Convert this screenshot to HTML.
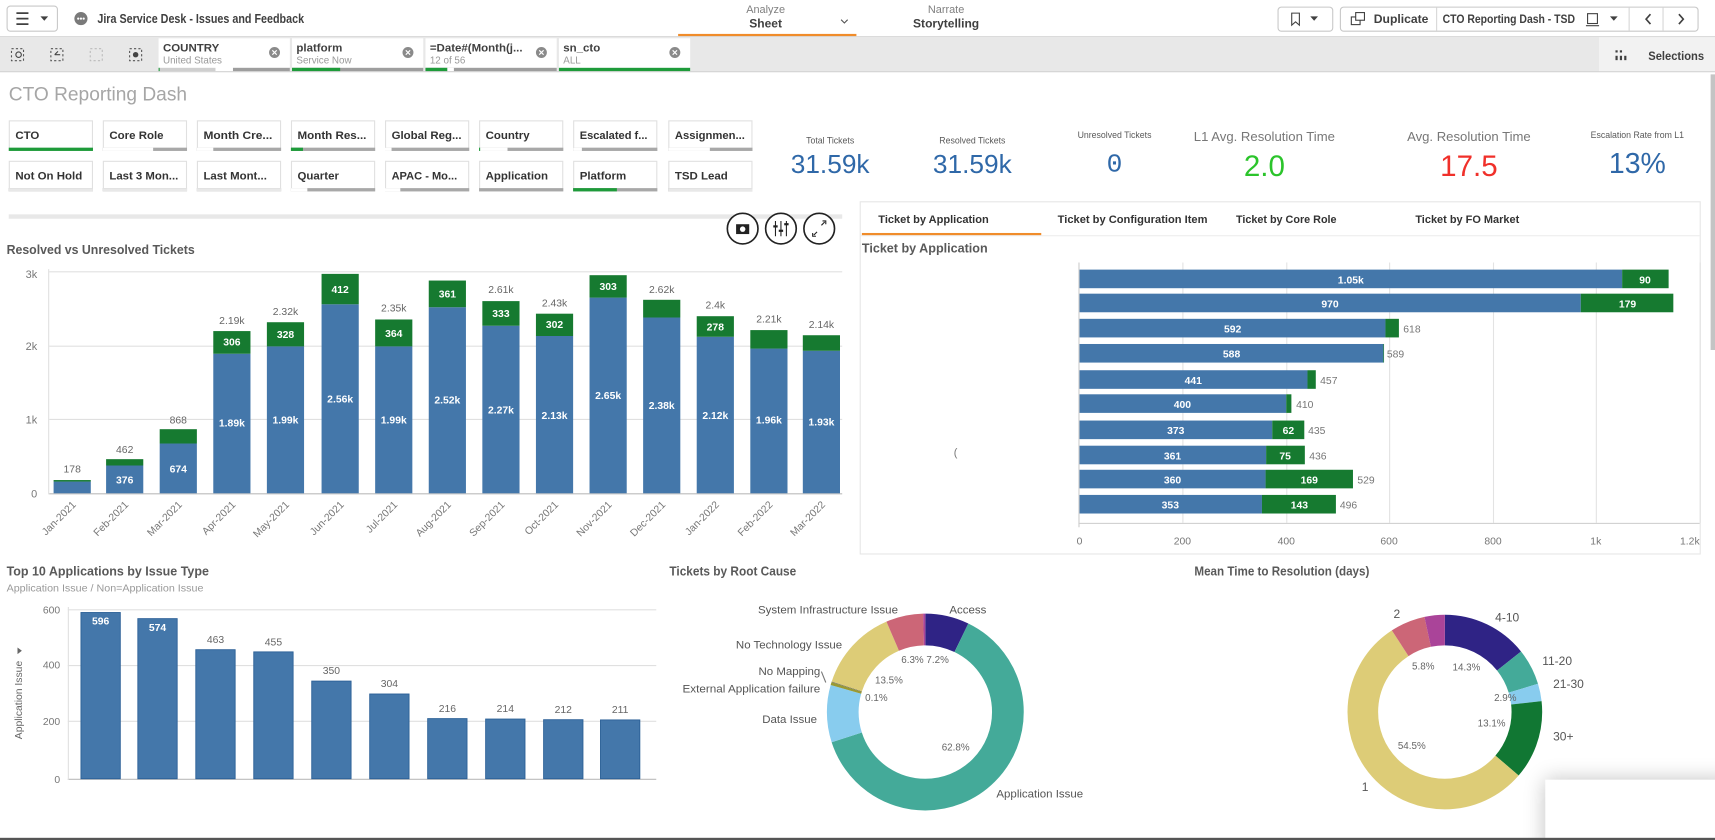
<!DOCTYPE html>
<html><head><meta charset="utf-8"><style>
html,body{margin:0;padding:0;background:#fff;width:1715px;height:840px;overflow:hidden}
svg{display:block}
text{font-family:"Liberation Sans",sans-serif}
.b{font-weight:bold}
.m{font-family:"Liberation Mono",monospace}
</style></head><body>
<svg width="1715" height="840" viewBox="0 0 1568 768" preserveAspectRatio="none" xmlns="http://www.w3.org/2000/svg">
<defs>
<filter id="sh" x="-50%" y="-50%" width="200%" height="200%"><feGaussianBlur in="SourceAlpha" stdDeviation="10"/><feComponentTransfer><feFuncA type="linear" slope="0.25"/></feComponentTransfer><feMerge><feMergeNode/><feMergeNode in="SourceGraphic"/></feMerge></filter>
</defs>
<!-- top bar -->
<rect x="0" y="0" width="1568" height="34" fill="#fff"/>
<line x1="0" y1="33.5" x2="1568" y2="33.5" stroke="#d6d6d6"/>
<rect x="6.5" y="5.5" width="46" height="23" rx="3" fill="#fff" stroke="#c8c8c8"/>
<path d="M15 12h11M15 17h11M15 22h11" stroke="#404040" stroke-width="1.6"/>
<path d="M37 15l3.5 4 3.5-4z" fill="#404040"/>
<circle cx="74" cy="17" r="6" fill="#7a7a7a"/>
<circle cx="71.5" cy="17" r="1" fill="#fff"/><circle cx="74" cy="17" r="1" fill="#fff"/><circle cx="76.5" cy="17" r="1" fill="#fff"/>
<text x="89" y="21" font-size="11.5" class="b" fill="#404040" textLength="189" lengthAdjust="spacingAndGlyphs">Jira Service Desk - Issues and Feedback</text>
<text x="700" y="12" font-size="10" fill="#808080" text-anchor="middle">Analyze</text>
<text x="700" y="25" font-size="11" class="b" fill="#404040" text-anchor="middle">Sheet</text>
<path d="M769 18l3 3 3-3" stroke="#555" fill="none"/>
<rect x="620" y="31" width="163" height="2" fill="#f08c2a"/>
<text x="865" y="12" font-size="10" fill="#808080" text-anchor="middle">Narrate</text>
<text x="865" y="25" font-size="11" class="b" fill="#404040" text-anchor="middle">Storytelling</text>
<rect x="1168.5" y="6.5" width="50" height="22" rx="3" fill="#fff" stroke="#c8c8c8"/>
<path d="M1181 12v11l3.5-3 3.5 3v-11z" fill="none" stroke="#404040"/>
<path d="M1198 15l3.5 4 3.5-4z" fill="#404040"/>
<rect x="1225.5" y="6.5" width="327" height="22" rx="3" fill="#fff" stroke="#c8c8c8"/>
<rect x="1235.5" y="15.5" width="8" height="7" fill="#fff" stroke="#404040"/><rect x="1239.5" y="11.5" width="8" height="7" fill="#fff" stroke="#404040"/>
<text x="1256" y="21" font-size="11" class="b" fill="#404040" textLength="50" lengthAdjust="spacingAndGlyphs">Duplicate</text>
<line x1="1313.5" y1="7" x2="1313.5" y2="28" stroke="#d6d6d6"/>
<text x="1319" y="21" font-size="11" class="b" fill="#404040" textLength="121" lengthAdjust="spacingAndGlyphs">CTO Reporting Dash - TSD</text>
<rect x="1451.5" y="12.5" width="9" height="9" fill="none" stroke="#404040"/><line x1="1450" y1="23.5" x2="1462" y2="23.5" stroke="#404040"/>
<path d="M1472 15l3.5 4 3.5-4z" fill="#404040"/>
<line x1="1489.5" y1="7" x2="1489.5" y2="28" stroke="#d6d6d6"/>
<path d="M1509 13l-4 4.5 4 4.5" stroke="#404040" stroke-width="1.5" fill="none"/>
<line x1="1520.5" y1="7" x2="1520.5" y2="28" stroke="#d6d6d6"/>
<path d="M1535 13l4 4.5-4 4.5" stroke="#404040" stroke-width="1.5" fill="none"/>

<!-- selection bar -->
<rect x="0" y="34" width="1568" height="31" fill="#e8e8e8"/>
<line x1="0" y1="65.5" x2="1568" y2="65.5" stroke="#d0d0d0"/>
<g fill="none" stroke="#555" stroke-dasharray="2 2">
<rect x="10.5" y="44.5" width="11" height="11"/><rect x="46.5" y="44.5" width="11" height="11"/><rect x="82.5" y="44.5" width="11" height="11" stroke="#bbb"/><rect x="118.5" y="44.5" width="11" height="11"/>
</g>
<circle cx="17" cy="50" r="2.5" fill="none" stroke="#444"/><circle cx="124" cy="50" r="2.5" fill="#444"/>
<path d="M50 50l3-3M50 50h5" stroke="#444"/>
<g>
<rect x="145" y="35" width="120" height="30" fill="#fff"/>
<text x="149" y="47" font-size="10.5" class="b" fill="#404040">COUNTRY</text>
<text x="149" y="58" font-size="9" fill="#999">United States</text>
<circle cx="251" cy="48" r="5" fill="#8a8a8a"/><path d="M249 46l4 4M253 46l-4 4" stroke="#fff"/>
<rect x="145" y="62" width="52" height="3" fill="#cfcfcf"/><rect x="145" y="62" width="1" height="3" fill="#1e9b3a"/><rect x="213" y="62" width="52" height="3" fill="#9e9e9e"/>
<rect x="267" y="35" width="120" height="30" fill="#fff"/>
<text x="271" y="47" font-size="10.5" class="b" fill="#404040">platform</text>
<text x="271" y="58" font-size="9" fill="#999">Service Now</text>
<circle cx="373" cy="48" r="5" fill="#8a8a8a"/><path d="M371 46l4 4M375 46l-4 4" stroke="#fff"/>
<rect x="267" y="62" width="120" height="3" fill="#9e9e9e"/><rect x="267" y="62" width="44" height="3" fill="#1e9b3a"/>
<rect x="389" y="35" width="120" height="30" fill="#fff"/>
<text x="393" y="47" font-size="10.5" class="b" fill="#404040">=Date#(Month(j...</text>
<text x="393" y="58" font-size="9" fill="#999">12 of 56</text>
<circle cx="495" cy="48" r="5" fill="#8a8a8a"/><path d="M493 46l4 4M497 46l-4 4" stroke="#fff"/>
<rect x="389" y="62" width="120" height="3" fill="#9e9e9e"/><rect x="389" y="62" width="20" height="3" fill="#1e9b3a"/><rect x="409" y="62" width="6" height="3" fill="#fff"/>
<rect x="511" y="35" width="120" height="30" fill="#fff"/>
<text x="515" y="47" font-size="10.5" class="b" fill="#404040">sn_cto</text>
<text x="515" y="58" font-size="9" fill="#999">ALL</text>
<circle cx="617" cy="48" r="5" fill="#8a8a8a"/><path d="M615 46l4 4M619 46l-4 4" stroke="#fff"/>
<rect x="511" y="62" width="120" height="3" fill="#1e9b3a"/>
</g>
<rect x="1462" y="34" width="106" height="31" fill="#f2f2f2"/>
<g fill="#404040"><rect x="1477" y="46" width="2" height="2"/><rect x="1481" y="46" width="2" height="2"/><rect x="1477" y="51" width="2" height="4"/><rect x="1481" y="51" width="2" height="4"/><rect x="1485" y="51" width="2" height="4"/></g>
<text x="1507" y="55" font-size="11" class="b" fill="#404040" textLength="51" lengthAdjust="spacingAndGlyphs">Selections</text>
<rect x="1564" y="68" width="4" height="252" fill="#c4c4c4"/>

<text x="8" y="92" font-size="18" fill="#a6a6a6" textLength="163" lengthAdjust="spacingAndGlyphs">CTO Reporting Dash</text>

<!-- filter buttons -->
<g stroke="#e0e0e0" fill="#fff">
<rect x="8.5" y="110.5" width="76" height="27"/><rect x="94.5" y="110.5" width="76" height="27"/><rect x="180.5" y="110.5" width="76" height="27"/><rect x="266.5" y="110.5" width="76" height="27"/><rect x="352.5" y="110.5" width="76" height="27"/><rect x="438.5" y="110.5" width="76" height="27"/><rect x="524.5" y="110.5" width="76" height="27"/><rect x="611.5" y="110.5" width="76" height="27"/>
<rect x="8.5" y="147.5" width="76" height="27"/><rect x="94.5" y="147.5" width="76" height="27"/><rect x="180.5" y="147.5" width="76" height="27"/><rect x="266.5" y="147.5" width="76" height="27"/><rect x="352.5" y="147.5" width="76" height="27"/><rect x="438.5" y="147.5" width="76" height="27"/><rect x="524.5" y="147.5" width="76" height="27"/><rect x="611.5" y="147.5" width="76" height="27"/>
</g>
<g fill="#a8a8a8">
<rect x="94" y="135" width="77" height="3"/><rect x="180" y="135" width="77" height="3"/><rect x="266" y="135" width="77" height="3"/><rect x="352" y="135" width="77" height="3"/><rect x="438" y="135" width="77" height="3"/><rect x="524" y="135" width="77" height="3"/><rect x="611" y="135" width="77" height="3"/>
<rect x="8" y="172" width="77" height="3"/><rect x="94" y="172" width="77" height="3"/><rect x="180" y="172" width="77" height="3"/><rect x="266" y="172" width="77" height="3"/><rect x="352" y="172" width="77" height="3"/><rect x="438" y="172" width="77" height="3"/><rect x="524" y="172" width="77" height="3"/><rect x="611" y="172" width="77" height="3"/>
</g>
<g fill="#fff"><rect x="94" y="135" width="46" height="3"/><rect x="180" y="135" width="15" height="3"/><rect x="438" y="135" width="26" height="3"/><rect x="352" y="135" width="6" height="3"/><rect x="524" y="135" width="8" height="3"/><rect x="611" y="135" width="38" height="3"/>
<rect x="8" y="172" width="77" height="3" fill="#e8e8e8"/><rect x="94" y="172" width="77" height="3" fill="#e8e8e8"/><rect x="180" y="172" width="77" height="3" fill="#e8e8e8"/><rect x="266" y="172" width="15" height="3"/><rect x="352" y="172" width="14" height="3"/><rect x="611" y="172" width="77" height="3" fill="#e8e8e8"/></g>
<rect x="8" y="135" width="77" height="3" fill="#1e9b3a"/><rect x="266" y="135" width="11" height="3" fill="#1e9b3a"/><rect x="438" y="135" width="1" height="3" fill="#1e9b3a"/><rect x="524" y="172" width="40" height="3" fill="#1e9b3a"/>
<g font-size="10.5" class="b" fill="#333">
<text x="14" y="127">CTO</text><text x="100" y="127">Core Role</text><text x="186" y="127" textLength="63" lengthAdjust="spacingAndGlyphs">Month Cre...</text><text x="272" y="127" textLength="63" lengthAdjust="spacingAndGlyphs">Month Res...</text><text x="358" y="127" textLength="64" lengthAdjust="spacingAndGlyphs">Global Reg...</text><text x="444" y="127">Country</text><text x="530" y="127" textLength="62" lengthAdjust="spacingAndGlyphs">Escalated f...</text><text x="617" y="127" textLength="64" lengthAdjust="spacingAndGlyphs">Assignmen...</text>
<text x="14" y="164">Not On Hold</text><text x="100" y="164" textLength="63" lengthAdjust="spacingAndGlyphs">Last 3 Mon...</text><text x="186" y="164" textLength="58" lengthAdjust="spacingAndGlyphs">Last Mont...</text><text x="272" y="164">Quarter</text><text x="358" y="164" textLength="60" lengthAdjust="spacingAndGlyphs">APAC - Mo...</text><text x="444" y="164">Application</text><text x="530" y="164">Platform</text><text x="617" y="164">TSD Lead</text>
</g>

<!-- KPIs -->
<g text-anchor="middle" fill="#595959">
<text x="759" y="131" font-size="8">Total Tickets</text>
<text x="889" y="131" font-size="8">Resolved Tickets</text>
<text x="1019" y="126" font-size="8">Unresolved Tickets</text>
<text x="1156" y="129" font-size="12" fill="#777">L1 Avg. Resolution Time</text>
<text x="1343" y="129" font-size="12" fill="#777">Avg. Resolution Time</text>
<text x="1497" y="126" font-size="8">Escalation Rate from L1</text>
</g>
<g text-anchor="middle" font-size="24">
<text x="759" y="158" fill="#2f68a8">31.59k</text>
<text x="889" y="158" fill="#2f68a8">31.59k</text>
<text x="1019" y="157" fill="#2f68a8" class="m">0</text>
<text x="1156" y="161" fill="#2bc42b" font-size="27">2.0</text>
<text x="1343" y="161" fill="#f0302a" font-size="27">17.5</text>
<text x="1497" y="158" fill="#2f68a8" font-size="26">13%</text>
</g>

<!-- left chart -->
<rect x="8" y="196" width="762" height="4" fill="#e8e8e8"/>
<g fill="#fff" stroke="#222" stroke-width="1.5"><circle cx="679" cy="209" r="14"/><circle cx="714" cy="209" r="14"/><circle cx="749" cy="209" r="14"/></g>
<rect x="673" y="205" width="12" height="9" fill="#222"/><circle cx="679" cy="209.5" r="2.5" fill="#fff"/>
<path d="M709 202v14M714 202v14M719 202v14" stroke="#222"/><rect x="707" y="206" width="4" height="2" fill="#222"/><rect x="712" y="210" width="4" height="2" fill="#222"/><rect x="717" y="204" width="4" height="2" fill="#222"/>
<path d="M752 202l3 0 0 3M746 216l-3 0 0-3M754 203l-3 3M744 215l3-3" stroke="#222" fill="none"/>
<text x="6" y="232" font-size="12" class="b" fill="#595959" textLength="172" lengthAdjust="spacingAndGlyphs">Resolved vs Unresolved Tickets</text>
<g stroke="#e0e0e0"><line x1="45" y1="248.5" x2="770" y2="248.5"/><line x1="45" y1="316.5" x2="770" y2="316.5"/><line x1="45" y1="383.5" x2="770" y2="383.5"/></g>
<line x1="45" y1="451.5" x2="770" y2="451.5" stroke="#bbb"/>
<line x1="44.5" y1="246" x2="44.5" y2="452" stroke="#e0e0e0"/>
<g font-size="10" fill="#777" text-anchor="end" class="m"><text x="34" y="254">3k</text><text x="34" y="320">2k</text><text x="34" y="387">1k</text><text x="34" y="455">0</text></g>
<g fill="#4477aa">
<rect x="49" y="440.3" width="34" height="10.7"/><rect x="97" y="425.6" width="34" height="25.4"/><rect x="146" y="405.5" width="34" height="45.5"/><rect x="195" y="323.4" width="34" height="127.6"/><rect x="244" y="316.7" width="34" height="134.3"/><rect x="294" y="278.2" width="34" height="172.8"/><rect x="343" y="316.7" width="34" height="134.3"/><rect x="392" y="280.9" width="34" height="170.1"/><rect x="441" y="297.8" width="34" height="153.2"/><rect x="490" y="307.2" width="34" height="143.8"/><rect x="539" y="272.1" width="34" height="178.9"/><rect x="588" y="290.3" width="34" height="160.7"/><rect x="637" y="307.9" width="34" height="143.1"/><rect x="686" y="318.7" width="34" height="132.3"/><rect x="734" y="320.7" width="34" height="130.3"/>
</g>
<g fill="#167a30">
<rect x="49" y="438.9" width="34" height="1.4"/><rect x="97" y="419.8" width="34" height="5.8"/><rect x="146" y="392.4" width="34" height="13.1"/><rect x="195" y="302.7" width="34" height="20.7"/><rect x="244" y="294.6" width="34" height="22.1"/><rect x="294" y="250.4" width="34" height="27.8"/><rect x="343" y="292.1" width="34" height="24.6"/><rect x="392" y="256.5" width="34" height="24.4"/><rect x="441" y="275.3" width="34" height="22.5"/><rect x="490" y="286.8" width="34" height="20.4"/><rect x="539" y="251.6" width="34" height="20.5"/><rect x="588" y="274.1" width="34" height="16.2"/><rect x="637" y="289.1" width="34" height="18.8"/><rect x="686" y="301.8" width="34" height="16.9"/><rect x="734" y="306.5" width="34" height="14.2"/>
</g>
<g font-size="9.5" fill="#666" text-anchor="middle" class="m">
<text x="66" y="432">178</text><text x="114" y="414">462</text><text x="163" y="387">868</text><text x="212" y="296">2.19k</text><text x="261" y="288">2.32k</text><text x="360" y="285">2.35k</text><text x="458" y="268">2.61k</text><text x="507" y="280">2.43k</text><text x="605" y="268">2.62k</text><text x="654" y="282">2.4k</text><text x="703" y="295">2.21k</text><text x="751" y="300">2.14k</text>
</g>
<g font-size="9.5" fill="#fff" text-anchor="middle" class="b">
<text x="114" y="442">376</text><text x="163" y="432">674</text><text x="212" y="390">1.89k</text><text x="261" y="387">1.99k</text><text x="311" y="368">2.56k</text><text x="360" y="387">1.99k</text><text x="409" y="369">2.52k</text><text x="458" y="378">2.27k</text><text x="507" y="383">2.13k</text><text x="556" y="365">2.65k</text><text x="605" y="374">2.38k</text><text x="654" y="383">2.12k</text><text x="703" y="387">1.96k</text><text x="751" y="389">1.93k</text>
<text x="212" y="316">306</text><text x="261" y="309">328</text><text x="311" y="268">412</text><text x="360" y="308">364</text><text x="409" y="272">361</text><text x="458" y="290">333</text><text x="507" y="300">302</text><text x="556" y="265">303</text><text x="654" y="302">278</text>
</g>
<g font-size="9.5" fill="#777" text-anchor="end" class="m">
<text transform="translate(70,462) rotate(-45)">Jan-2021</text><text transform="translate(118,462) rotate(-45)">Feb-2021</text><text transform="translate(167,462) rotate(-45)">Mar-2021</text><text transform="translate(216,462) rotate(-45)">Apr-2021</text><text transform="translate(265,462) rotate(-45)">May-2021</text><text transform="translate(315,462) rotate(-45)">Jun-2021</text><text transform="translate(364,462) rotate(-45)">Jul-2021</text><text transform="translate(413,462) rotate(-45)">Aug-2021</text><text transform="translate(462,462) rotate(-45)">Sep-2021</text><text transform="translate(511,462) rotate(-45)">Oct-2021</text><text transform="translate(560,462) rotate(-45)">Nov-2021</text><text transform="translate(609,462) rotate(-45)">Dec-2021</text><text transform="translate(658,462) rotate(-45)">Jan-2022</text><text transform="translate(707,462) rotate(-45)">Feb-2022</text><text transform="translate(755,462) rotate(-45)">Mar-2022</text>
</g>

<!-- right panel -->
<rect x="786.5" y="184.5" width="768" height="322" fill="#fff" stroke="#e6e6e6"/>
<line x1="787" y1="215.5" x2="1554" y2="215.5" stroke="#eee"/>
<rect x="788" y="213" width="164" height="2" fill="#f08c2a"/>
<g font-size="10.5" class="b" fill="#333"><text x="803" y="204" textLength="101" lengthAdjust="spacingAndGlyphs">Ticket by Application</text><text x="967" y="204" textLength="137" lengthAdjust="spacingAndGlyphs">Ticket by Configuration Item</text><text x="1130" y="204" textLength="92" lengthAdjust="spacingAndGlyphs">Ticket by Core Role</text><text x="1294" y="204" textLength="95" lengthAdjust="spacingAndGlyphs">Ticket by FO Market</text></g>
<text x="788" y="231" font-size="12" class="b" fill="#595959" textLength="115" lengthAdjust="spacingAndGlyphs">Ticket by Application</text>
<text x="872" y="417" font-size="10" fill="#777">(</text>
<g stroke="#e3e3e3"><line x1="1081.5" y1="240" x2="1081.5" y2="478"/><line x1="1176.5" y1="240" x2="1176.5" y2="478"/><line x1="1270.5" y1="240" x2="1270.5" y2="478"/><line x1="1365.5" y1="240" x2="1365.5" y2="478"/><line x1="1459.5" y1="240" x2="1459.5" y2="478"/><line x1="1554.5" y1="240" x2="1554.5" y2="478"/></g>
<line x1="986.5" y1="240" x2="986.5" y2="482" stroke="#ccc"/>
<line x1="986" y1="478.5" x2="1554" y2="478.5" stroke="#ccc"/>
<g fill="#4477aa">
<rect x="987" y="246.5" width="496.1" height="17"/><rect x="987" y="268.5" width="458.3" height="17"/><rect x="987" y="291.5" width="279.7" height="17"/><rect x="987" y="314.5" width="277.8" height="17"/><rect x="987" y="338.5" width="208.4" height="17"/><rect x="987" y="360.5" width="189" height="17"/><rect x="987" y="384.5" width="176.2" height="17"/><rect x="987" y="407.5" width="170.6" height="17"/><rect x="987" y="429.5" width="170.1" height="17"/><rect x="987" y="452.5" width="166.8" height="17"/>
</g>
<g fill="#167a30">
<rect x="1483.1" y="246.5" width="42.5" height="17"/><rect x="1445.3" y="268.5" width="84.6" height="17"/><rect x="1266.7" y="291.5" width="12.3" height="17"/><rect x="1264.8" y="314.5" width="0.6" height="17"/><rect x="1195.4" y="338.5" width="7.6" height="17"/><rect x="1176" y="360.5" width="4.7" height="17"/><rect x="1163.2" y="384.5" width="29.3" height="17"/><rect x="1157.6" y="407.5" width="35.4" height="17"/><rect x="1157.1" y="429.5" width="79.9" height="17"/><rect x="1153.8" y="452.5" width="67.6" height="17"/>
</g>
<g font-size="9.5" fill="#fff" text-anchor="middle" class="b">
<text x="1235" y="259">1.05k</text><text x="1216" y="281">970</text><text x="1127" y="304">592</text><text x="1126" y="327">588</text><text x="1091" y="351">441</text><text x="1081" y="373">400</text><text x="1075" y="397">373</text><text x="1072" y="420">361</text><text x="1072" y="442">360</text><text x="1070" y="465">353</text>
<text x="1504" y="259">90</text><text x="1488" y="281">179</text><text x="1178" y="397">62</text><text x="1175" y="420">75</text><text x="1197" y="442">169</text><text x="1188" y="465">143</text>
</g>
<g font-size="9.5" fill="#777" class="m">
<text x="1283" y="304">618</text><text x="1268" y="327">589</text><text x="1207" y="351">457</text><text x="1185" y="373">410</text><text x="1196" y="397">435</text><text x="1197" y="420">436</text><text x="1241" y="442">529</text><text x="1225" y="465">496</text>
</g>
<g font-size="9.5" fill="#777" text-anchor="middle" class="m">
<text x="987" y="498">0</text><text x="1081" y="498">200</text><text x="1176" y="498">400</text><text x="1270" y="498">600</text><text x="1365" y="498">800</text><text x="1459" y="498">1k</text><text x="1545" y="498">1.2k</text>
</g>

<!-- bottom left chart -->
<text x="6" y="526" font-size="12" class="b" fill="#595959" textLength="185" lengthAdjust="spacingAndGlyphs">Top 10 Applications by Issue Type</text>
<text x="6" y="541" font-size="9" fill="#999" textLength="180" lengthAdjust="spacingAndGlyphs">Application Issue / Non=Application Issue</text>
<g stroke="#e0e0e0"><line x1="62" y1="557.5" x2="600" y2="557.5"/><line x1="62" y1="608.5" x2="600" y2="608.5"/><line x1="62" y1="659.5" x2="600" y2="659.5"/></g>
<line x1="62" y1="712.5" x2="600" y2="712.5" stroke="#bbb"/>
<line x1="62.5" y1="555" x2="62.5" y2="713" stroke="#e0e0e0"/>
<g font-size="9.5" fill="#777" text-anchor="end" class="m"><text x="55" y="561">600</text><text x="55" y="611">400</text><text x="55" y="663">200</text><text x="55" y="716">0</text></g>
<text transform="translate(20,640) rotate(-90)" font-size="9.5" fill="#666" text-anchor="middle">Application Issue</text>
<path d="M16 592l4 3-4 3z" fill="#666"/>
<g fill="#4477aa" stroke="#2a5f96" stroke-width="0.8">
<rect x="74" y="560" width="36" height="152"/><rect x="126" y="565.6" width="36" height="146.4"/><rect x="179" y="594" width="36" height="118"/><rect x="232" y="596" width="36" height="116"/><rect x="285" y="622.7" width="36" height="89.3"/><rect x="338" y="634.5" width="36" height="77.5"/><rect x="391" y="657" width="36" height="55"/><rect x="444" y="657.4" width="36" height="54.6"/><rect x="497" y="658" width="36" height="54"/><rect x="549" y="658.2" width="36" height="53.8"/>
</g>
<g font-size="9.5" text-anchor="middle" class="b" fill="#fff"><text x="92" y="571">596</text><text x="144" y="577">574</text></g>
<g font-size="9.5" text-anchor="middle" fill="#666" class="m"><text x="197" y="588">463</text><text x="250" y="590">455</text><text x="303" y="616">350</text><text x="356" y="628">304</text><text x="409" y="651">216</text><text x="462" y="651">214</text><text x="515" y="652">212</text><text x="567" y="652">211</text></g>

<!-- root cause donut -->
<text x="612" y="526" font-size="12" class="b" fill="#595959" textLength="116" lengthAdjust="spacingAndGlyphs">Tickets by Root Cause</text>
<g transform="rotate(-90 846 651)" fill="none" stroke-width="29">
<circle cx="846" cy="651" r="75.5" stroke="#2f2385" stroke-dasharray="34.15 500" stroke-dashoffset="0"/>
<circle cx="846" cy="651" r="75.5" stroke="#44aa99" stroke-dasharray="297.9 500" stroke-dashoffset="-34.15"/>
<circle cx="846" cy="651" r="75.5" stroke="#88ccee" stroke-dasharray="44.6 500" stroke-dashoffset="-332.05"/>
<circle cx="846" cy="651" r="75.5" stroke="#999933" stroke-dasharray="2.37 500" stroke-dashoffset="-376.65"/>
<circle cx="846" cy="651" r="75.5" stroke="#666" stroke-dasharray="0.47 500" stroke-dashoffset="-379.02"/>
<circle cx="846" cy="651" r="75.5" stroke="#ddcc77" stroke-dasharray="64.04 500" stroke-dashoffset="-379.49"/>
<circle cx="846" cy="651" r="75.5" stroke="#cc6677" stroke-dasharray="29.0 500" stroke-dashoffset="-443.53"/>
<circle cx="846" cy="651" r="75.5" stroke="#aa4499" stroke-dasharray="1.9 500" stroke-dashoffset="-472.5"/>
</g>
<g font-size="10.5" fill="#555">
<text x="868" y="561">Access</text>
<text x="821" y="561" text-anchor="end" textLength="128" lengthAdjust="spacingAndGlyphs">System Infrastructure Issue</text>
<text x="770" y="593" text-anchor="end">No Technology Issue</text>
<text x="750" y="617" text-anchor="end">No Mapping</text>
<text x="750" y="633" text-anchor="end" textLength="126" lengthAdjust="spacingAndGlyphs">External Application failure</text>
<text x="747" y="661" text-anchor="end">Data Issue</text>
<text x="911" y="729">Application Issue</text>
</g>
<path d="M751 614l4 10" stroke="#777"/>
<g font-size="9" fill="#666" class="m"><text x="824" y="606">6.3%</text><text x="847" y="606">7.2%</text><text x="800" y="625">13.5%</text><text x="791" y="641">0.1%</text><text x="861" y="686">62.8%</text></g>

<!-- MTTR donut -->
<text x="1172" y="526" font-size="12" class="b" fill="#595959" text-anchor="middle" textLength="160" lengthAdjust="spacingAndGlyphs">Mean Time to Resolution (days)</text>
<g transform="rotate(-90 1321 651)" fill="none" stroke-width="28">
<circle cx="1321" cy="651" r="75" stroke="#2f2385" stroke-dasharray="67.39 500" stroke-dashoffset="0"/>
<circle cx="1321" cy="651" r="75" stroke="#44aa99" stroke-dasharray="28.27 500" stroke-dashoffset="-67.39"/>
<circle cx="1321" cy="651" r="75" stroke="#88ccee" stroke-dasharray="13.67 500" stroke-dashoffset="-95.66"/>
<circle cx="1321" cy="651" r="75" stroke="#117733" stroke-dasharray="61.73 500" stroke-dashoffset="-109.33"/>
<circle cx="1321" cy="651" r="75" stroke="#ddcc77" stroke-dasharray="256.83 500" stroke-dashoffset="-171.06"/>
<circle cx="1321" cy="651" r="75" stroke="#cc6677" stroke-dasharray="27.33 500" stroke-dashoffset="-427.89"/>
<circle cx="1321" cy="651" r="75" stroke="#aa4499" stroke-dasharray="16.02 500" stroke-dashoffset="-455.22"/>
</g>
<g font-size="11" fill="#555" class="m">
<text x="1367" y="568">4-10</text><text x="1410" y="608">11-20</text><text x="1420" y="629">21-30</text><text x="1420" y="677">30+</text><text x="1245" y="723">1</text><text x="1274" y="565">2</text>
</g>
<g font-size="9" fill="#666" class="m"><text x="1291" y="612">5.8%</text><text x="1328" y="613">14.3%</text><text x="1366" y="641">2.9%</text><text x="1351" y="664">13.1%</text><text x="1278" y="685">54.5%</text></g>

<rect x="1413" y="713" width="170" height="70" fill="#fff" filter="url(#sh)"/>
<rect x="0" y="766" width="1568" height="2" fill="#555"/>
</svg>
</body></html>
